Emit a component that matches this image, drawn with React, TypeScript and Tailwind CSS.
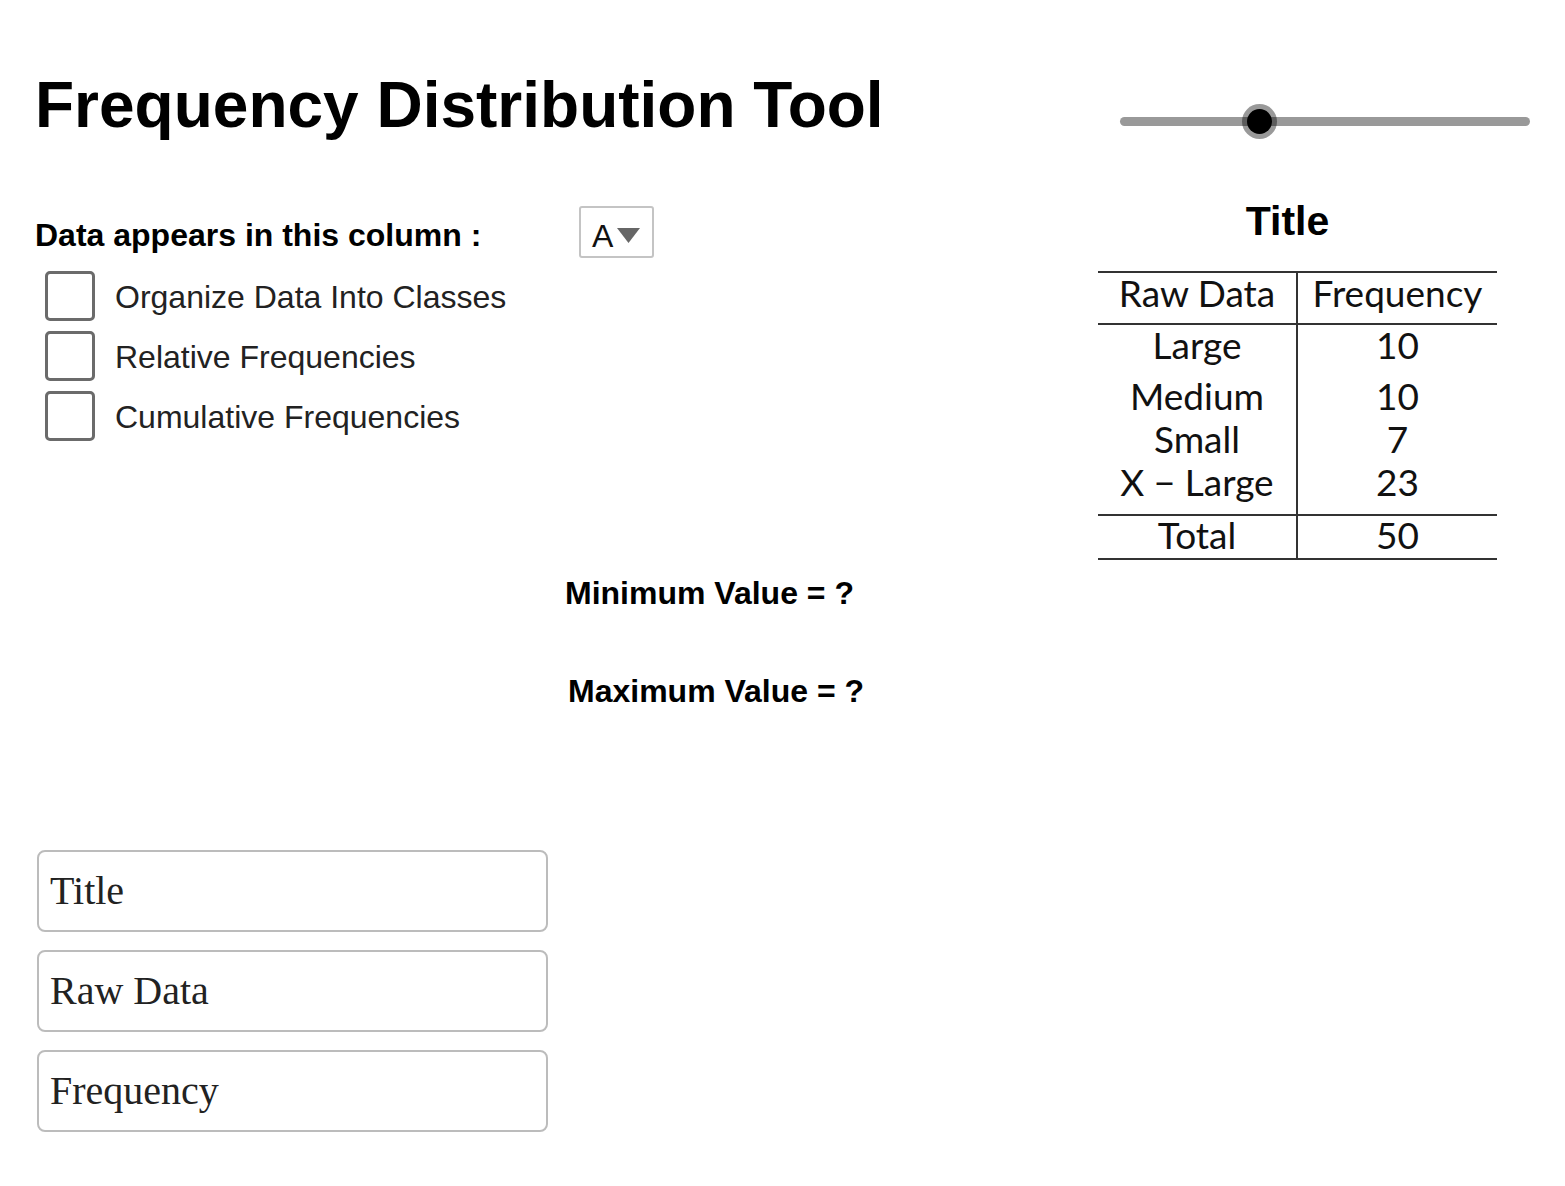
import React from "react";

const bodyRows = [
  { raw: "Large", freq: "10", mt: "mt-[1px]" },
  { raw: "Medium", freq: "10", mt: "mt-[14px]" },
  { raw: "Small", freq: "7", mt: "mt-[6px]" },
  { raw: "X − Large", freq: "23", mt: "mt-[6px]" },
];

const options = ["Organize Data Into Classes", "Relative Frequencies", "Cumulative Frequencies"];

const fields = ["Title", "Raw Data", "Frequency"];

function Slider() {
  return (
    <div className="relative mt-[31px] flex h-[35px] w-[410px] items-center">
      <div className="h-[9px] w-full rounded-full bg-[#999999]" />
      <div className="absolute left-[122px] top-0 flex h-[35px] w-[35px] items-center justify-center rounded-full bg-[rgba(0,0,0,0.4)]">
        <div className="h-[25px] w-[25px] rounded-full bg-black" />
      </div>
    </div>
  );
}

function Dropdown() {
  return (
    <div className="flex h-[52px] w-[75px] items-start rounded-[3px] border-2 border-[#c4c4c4] bg-white pl-[11px]">
      <span className="mt-[12px] text-[32px] leading-none text-[#111]">A</span>
      <svg className="ml-[4px] mt-[20px]" width="23" height="15" viewBox="0 0 23 15">
        <path d="M0 0 H23 L11.5 15 Z" fill="#666666" />
      </svg>
    </div>
  );
}

function Checkbox({ label }: { label: string }) {
  return (
    <label className="flex h-[50px] items-center gap-[20px]">
      <span className="h-[50px] w-[50px] rounded-[5px] border-[3px] border-[#6b6b6b] bg-white" />
      <span className="mt-[2px] text-[32px] leading-none text-[#222]">{label}</span>
    </label>
  );
}

function Section({ children, className = "" }: { children: React.ReactNode; className?: string }) {
  return <div className={"flex border-b-2 border-[#333] " + className}>{children}</div>;
}

function FrequencyTable() {
  return (
    <div className="flex flex-col font-['Lato',sans-serif] text-[37px] leading-none text-[#111]">
      <Section className="border-t-2">
        <div className="flex w-[200px] justify-center border-r-2 border-[#333] pb-[12px] pt-[1px]">Raw Data</div>
        <div className="flex flex-1 justify-center pb-[12px] pt-[1px]">Frequency</div>
      </Section>
      <Section>
        <div className="flex w-[200px] flex-col items-center border-r-2 border-[#333] pb-[14px]">
          {bodyRows.map((r) => (
            <span key={r.raw} className={r.mt}>
              {r.raw}
            </span>
          ))}
        </div>
        <div className="flex flex-1 flex-col items-center pb-[14px]">
          {bodyRows.map((r) => (
            <span key={r.raw} className={r.mt}>
              {r.freq}
            </span>
          ))}
        </div>
      </Section>
      <Section>
        <div className="flex w-[200px] justify-center border-r-2 border-[#333] pb-[5px]">Total</div>
        <div className="flex flex-1 justify-center pb-[5px]">50</div>
      </Section>
    </div>
  );
}

export default function App() {
  return (
    <div className="flex h-[1186px] w-[1565px] flex-col bg-white font-['Liberation_Sans',Arial,sans-serif] text-black">
      <header className="flex h-[137px] items-start justify-between px-[35px] pt-[73px]">
        <h1 className="text-[64px] font-bold leading-none">Frequency Distribution Tool</h1>
        <Slider />
      </header>

      <div className="flex pl-[35px]">
        <div className="flex w-[1063px] flex-col">
          <div className="mt-[69px] flex h-[52px] items-start">
            <span className="w-[544px] pt-[13px] text-[32px] font-bold leading-none">Data appears in this column :</span>
            <Dropdown />
          </div>

          <div className="ml-[10px] mt-[13px] flex flex-col gap-[10px]">
            {options.map((o) => (
              <Checkbox key={o} label={o} />
            ))}
          </div>

          <p className="ml-[530px] mt-[136px] text-[32px] font-bold leading-none">Minimum Value = ?</p>
          <p className="ml-[533px] mt-[66px] text-[32px] font-bold leading-none">Maximum Value = ?</p>

          <div className="ml-[2px] mt-[143px] flex w-[511px] flex-col gap-[18px]">
            {fields.map((f) => (
              <div
                key={f}
                className="flex h-[82px] items-center rounded-[8px] border-2 border-[#bcbcbc] bg-white pl-[11px] font-['Liberation_Serif',serif] text-[40px] leading-none text-[#222]"
              >
                {f}
              </div>
            ))}
          </div>
        </div>

        <div className="flex w-[399px] flex-col">
          <h2 className="mt-[64px] pr-[20px] text-center text-[41px] font-bold leading-none">Title</h2>
          <div className="mt-[29px]">
            <FrequencyTable />
          </div>
        </div>
      </div>
    </div>
  );
}
